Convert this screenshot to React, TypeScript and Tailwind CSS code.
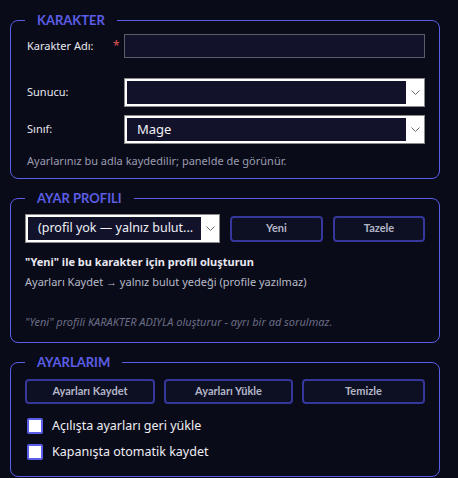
import React from "react";

const font = { fontFamily: '"Noto Sans", "Open Sans", sans-serif' };
const lato = { fontFamily: '"Lato", "Noto Sans", sans-serif' };

function Chevron() {
  return (
    <svg width="9" height="5" viewBox="0 0 9 5" fill="none">
      <path d="M0.5 0.5 L4.5 4.5 L8.5 0.5" stroke="#6b6b6b" strokeWidth="1" />
    </svg>
  );
}

function FakeSelect({ value, className, textClass }: { value?: string; className?: string; textClass?: string }) {
  return (
    <div className={`flex h-[29px] border border-[#8a8a8a] bg-white ${className ?? ""}`}>
      <div className={`flex min-w-0 flex-1 items-center overflow-hidden whitespace-nowrap bg-[#12132b] my-[2px] ml-[2px] pl-[10px] text-[#f0f0f5] ${textClass ?? "text-[13px]"}`}>
        {value}
      </div>
      <div className="flex w-[18px] items-center justify-center">
        <Chevron />
      </div>
    </div>
  );
}

function Fieldset({ title, className, children }: { title: string; className?: string; children: React.ReactNode }) {
  return (
    <fieldset className={`rounded-lg border border-[#5a5de8] px-[14px] ${className ?? ""}`}>
      <legend className="px-3 text-[13px] font-bold leading-[18px] text-[#5b5ee6]" style={lato}>{title}</legend>
      {children}
    </fieldset>
  );
}

function Btn({ children, className }: { children: React.ReactNode; className?: string }) {
  return (
    <button style={lato} className={`flex items-center justify-center rounded-[4px] border-2 border-[#35379a] bg-[#0d0f22] text-[11px] font-bold text-[#b4b6c8] ${className ?? ""}`}>
      {children}
    </button>
  );
}

function Check({ label }: { label: string }) {
  return (
    <div className="flex h-5 items-center">
      <div className="ml-[2px] h-4 w-4 rounded-[2px] border-2 border-[#5a5de8] bg-white" />
      <span className="ml-[9px] text-[12.5px] text-[#eeeef5]">{label}</span>
    </div>
  );
}

export default function App() {
  return (
    <div className="min-h-[478px] w-[458px] bg-[#0a0b18] px-[10px] pt-[11px]" style={font}>
      <Fieldset title="KARAKTER" className="w-[430px] pb-[10px] pt-[3px]">
        <div className="flex h-7 items-center">
          <span className="w-[88px] pl-[2px] text-[11px] text-[#e8e8f0]">Karakter Adı:</span>
          <span className="w-[11px] text-[12px] text-[#e05555]">*</span>
          <div className="h-6 flex-1 border border-[#5c5c66] bg-[#12132b]" />
        </div>
        <div className="mt-[18px] flex items-center">
          <span className="w-[99px] pl-[2px] text-[11px] text-[#e8e8f0]">Sunucu:</span>
          <FakeSelect className="flex-1" />
        </div>
        <div className="mt-2 flex items-center">
          <span className="w-[99px] pl-[2px] text-[11px] text-[#e8e8f0]">Sınıf:</span>
          <FakeSelect className="flex-1" value="Mage" />
        </div>
        <p className="mt-[9px] pl-[2px] text-[11px] leading-[15px] text-[#9a9cb0]">
          Ayarlarınız bu adla kaydedilir; panelde de görünür.
        </p>
      </Fieldset>

      <Fieldset title="AYAR PROFILI" className="mt-[10px] w-[430px] pb-[13px] pt-[7px]">
        <div className="flex items-center gap-[10px]">
          <FakeSelect className="w-[195px]" textClass="text-[12.5px]" value="(profil yok — yalnız bulut..." />
          <Btn className="h-[26px] w-[93px]">Yeni</Btn>
          <Btn className="h-[26px] flex-1">Tazele</Btn>
        </div>
        <p className="mt-[11px] text-[11px] font-bold leading-4 text-[#e8e8f0]">
          "Yeni" ile bu karakter için profil oluşturun
        </p>
        <p className="mt-1 text-[11px] leading-[15px] text-[#b8bac8]">
          Ayarları Kaydet → yalnız bulut yedeği (profile yazılmaz)
        </p>
        <p className="mt-[26px] text-[11px] italic leading-[14px] text-[#6b6d85]">
          "Yeni" profili KARAKTER ADIYLA oluşturur - ayrı bir ad sorulmaz.
        </p>
      </Fieldset>

      <Fieldset title="AYARLARIM" className="mt-[10px] w-[430px] pb-[14px] pt-2">
        <div className="flex gap-[9px]">
          <Btn className="h-[25px] w-[130px]">Ayarları Kaydet</Btn>
          <Btn className="h-[25px] w-[129px]">Ayarları Yükle</Btn>
          <Btn className="h-[25px] flex-1">Temizle</Btn>
        </div>
        <div className="mt-3 flex flex-col gap-[6px]">
          <Check label="Açılışta ayarları geri yükle" />
          <Check label="Kapanışta otomatik kaydet" />
        </div>
      </Fieldset>
    </div>
  );
}
